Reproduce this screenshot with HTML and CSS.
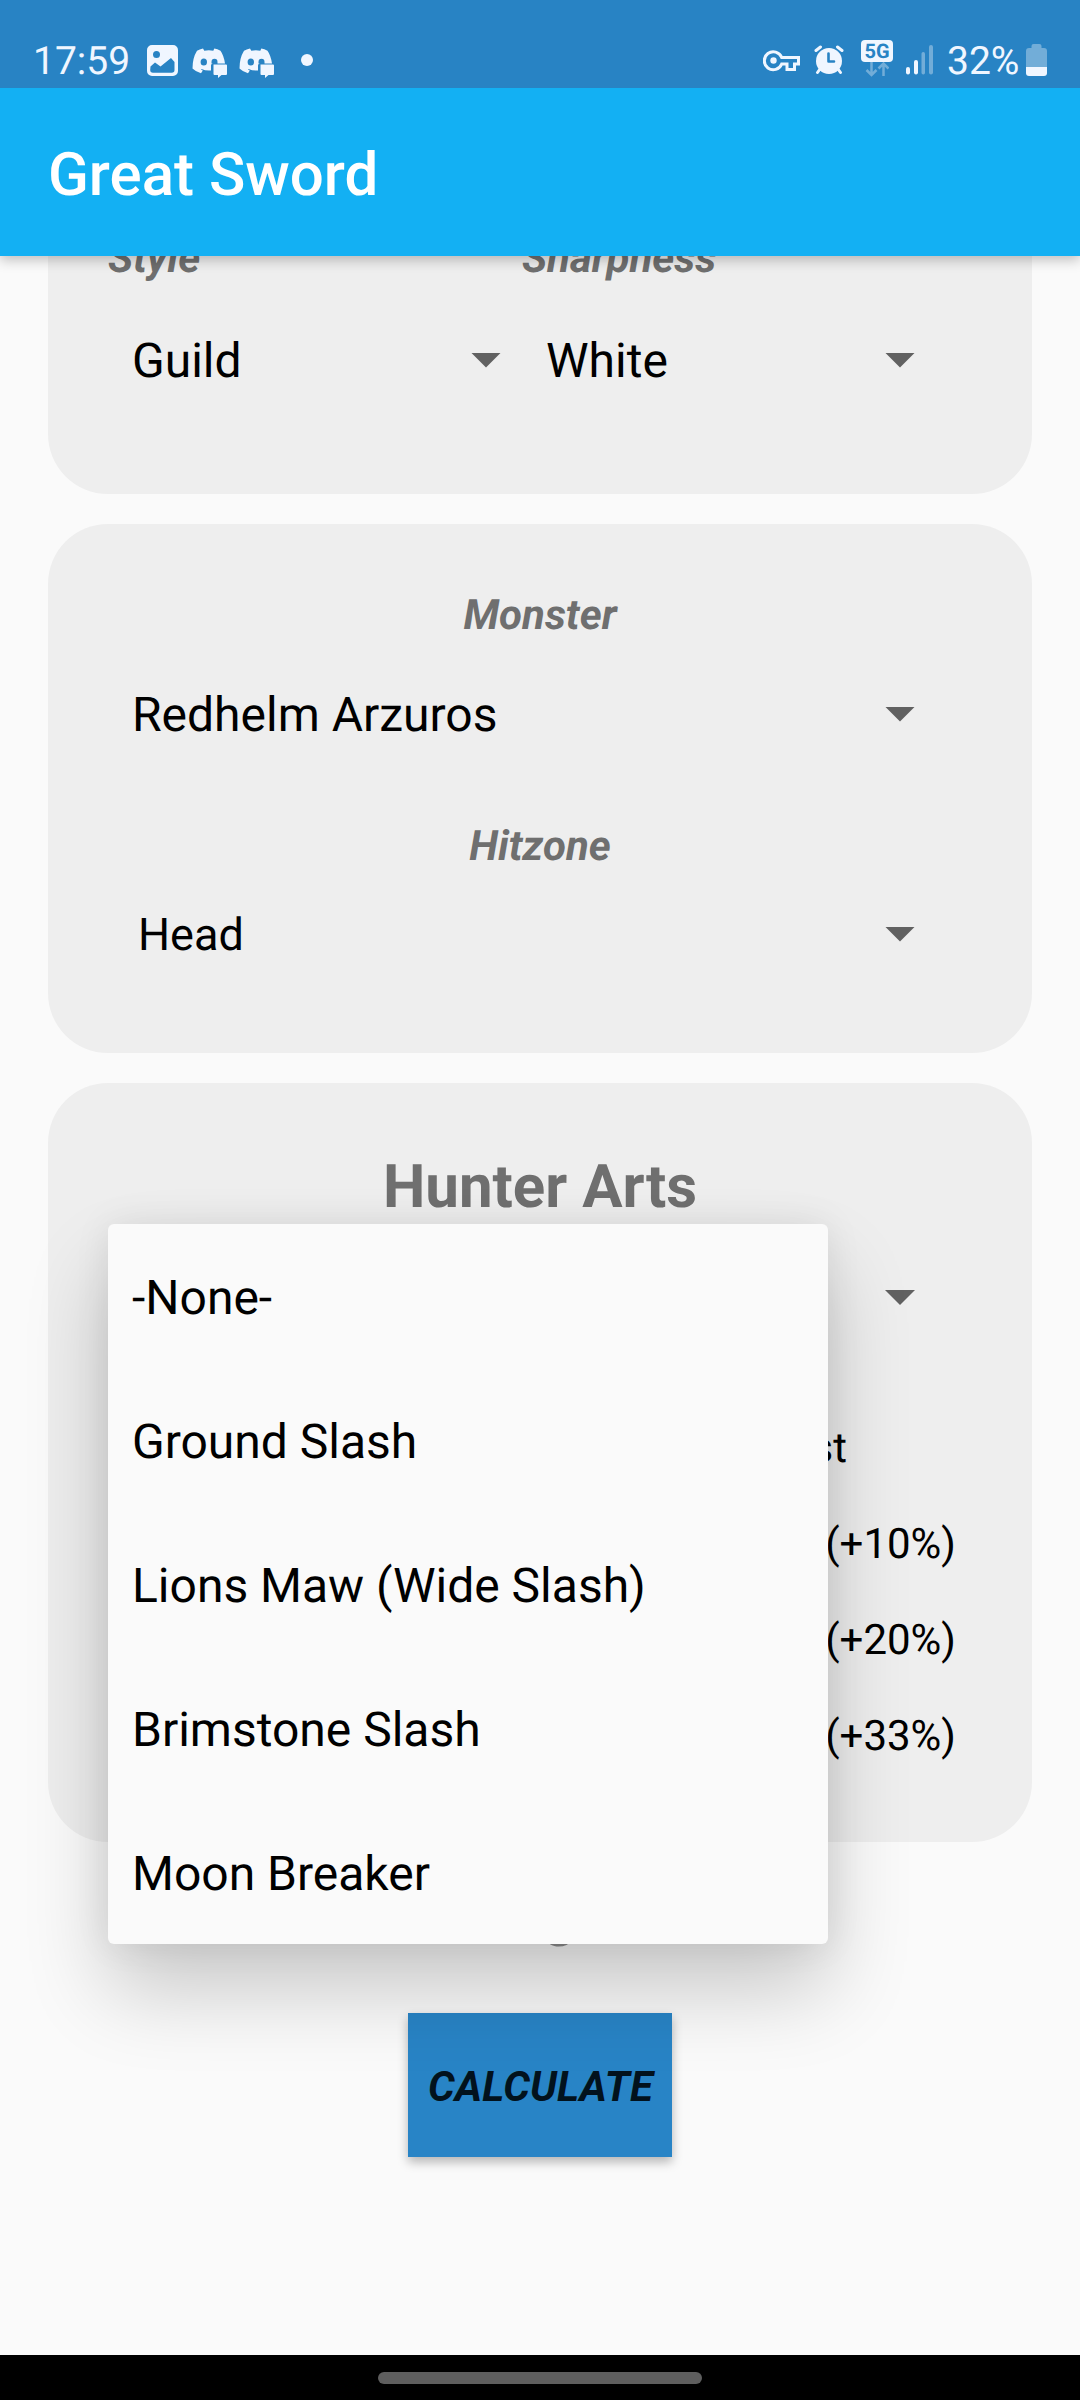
FILE: index.html
```html
<!DOCTYPE html>
<html lang="en">
<head>
<meta charset="utf-8">
<title>Great Sword</title>
<link rel="stylesheet" href="styles.css">
</head>
<body>
<div class="screen">
  <header class="status">
    <div class="status-group">
      <span class="clock">17:59</span>
      <svg class="ic-gallery" width="31" height="31" viewBox="0 0 31 31">
        <path fill="#f0f6ff" fill-rule="evenodd" d="M5 0H26a5 5 0 0 1 5 5V26a5 5 0 0 1-5 5H5a5 5 0 0 1-5-5V5a5 5 0 0 1 5-5ZM9.500 6a3.500 3.500 0 1 0 0 7a3.500 3.500 0 1 0 0-7ZM3.500 21.500L8 17.500L13.500 21.500L24 13L27.500 17V25a2.800 2.800 0 0 1-2.800 2.800H6a2.800 2.800 0 0 1-2.800-2.800Z"/>
      </svg>
      <svg class="ic-chat" width="36" height="30" viewBox="0 0 36 30">
        <path fill="#f0f6ff" fill-rule="evenodd" d="M11 .500Q7.500 1.200 5 2.800Q.500 10 .500 20.500Q4 24 9 25.200L10.800 22.500L9 21.500L9.500 21Q14 23 19 22.500V17.500a2 2 0 0 1 2-2H33Q31.800 7.500 28.500 2.800Q25.500 1 22.300 .500L21.300 2.700Q16.800 2 12.300 2.700ZM11.800 10.500a3.200 3.500 0 1 1 0 7a3.200 3.500 0 1 1 0-7ZM22.500 10.800a3 3.200 0 0 1 3 3.200v1.500h-6V14a3 3.200 0 0 1 3-3.200Z"/>
        <path fill="#f0f6ff" d="M21.500 16.500H34a1 1 0 0 1 1 1V26a1 1 0 0 1-1 1H29.500L26 30V27H22.500a1 1 0 0 1-1-1Z"/>
      </svg>
      <svg class="ic-chat second" width="36" height="30" viewBox="0 0 36 30">
        <path fill="#f0f6ff" fill-rule="evenodd" d="M11 .500Q7.500 1.200 5 2.800Q.500 10 .500 20.500Q4 24 9 25.200L10.800 22.500L9 21.500L9.500 21Q14 23 19 22.500V17.500a2 2 0 0 1 2-2H33Q31.800 7.500 28.500 2.800Q25.500 1 22.300 .500L21.300 2.700Q16.800 2 12.300 2.700ZM11.800 10.500a3.200 3.500 0 1 1 0 7a3.200 3.500 0 1 1 0-7ZM22.500 10.800a3 3.200 0 0 1 3 3.200v1.500h-6V14a3 3.200 0 0 1 3-3.200Z"/>
        <path fill="#f0f6ff" d="M21.500 16.500H34a1 1 0 0 1 1 1V26a1 1 0 0 1-1 1H29.500L26 30V27H22.500a1 1 0 0 1-1-1Z"/>
      </svg>
      <span class="dot"></span>
    </div>
    <div class="status-group">
      <svg class="ic-key" width="38" height="22" viewBox="0 0 38 22">
        <path fill="none" stroke="#f0f6ff" stroke-width="3" d="M18.700 7.500A9 9 0 1 0 18.700 14H24V19.500H31.500V14H35.500V7.500Z"/>
        <circle cx="10.500" cy="10.500" r="3.200" fill="#f0f6ff"/>
      </svg>
      <svg class="ic-alarm" width="30" height="30" viewBox="0 0 30 30">
        <circle cx="15" cy="16" r="13" fill="#f0f6ff"/>
        <path fill="none" stroke="#f0f6ff" stroke-width="3" stroke-linecap="round" d="M2 5.500L6.500 2M28 5.500L23.500 2M6 24L3.500 27.500M24 24L26.500 27.500"/>
        <path fill="none" stroke="#2883c4" stroke-width="2.600" stroke-linecap="round" stroke-linejoin="round" d="M14.500 8.500V16.500H20"/>
      </svg>
      <div class="net">
        <span class="badge">5G</span>
        <svg width="24" height="15" viewBox="0 0 24 15">
          <path fill="none" stroke="#72add8" stroke-width="2.500" d="M6.500 0V13M1.500 8L6.500 13L11.500 8M18.500 14V1M13.500 6.500L18.500 1.500L23.500 6.500"/>
        </svg>
      </div>
      <svg class="ic-signal" width="28" height="30" viewBox="0 0 28 30">
        <rect x="0" y="22" width="4" height="7.500" rx="2" fill="#f0f6ff"/>
        <rect x="8" y="15" width="4" height="14.500" rx="2" fill="#f0f6ff"/>
        <rect x="15.500" y="7" width="3.500" height="22.500" rx="1.700" fill="#72add8"/>
        <rect x="23" y="0" width="4" height="29.500" rx="2" fill="#72add8"/>
      </svg>
      <span class="percent">32%</span>
      <svg class="ic-battery" width="21" height="32" viewBox="0 0 21 32">
        <path fill="#72add8" d="M7.500 0H13.500a2 2 0 0 1 2 2V4H18a3 3 0 0 1 3 3V23H0V7A3 3 0 0 1 3 4H5.500V2a2 2 0 0 1 2-2Z"/>
        <path fill="#f0f6ff" d="M0 23H21V29a3 3 0 0 1-3 3H3a3 3 0 0 1-3-3Z"/>
      </svg>
    </div>
  </header>
  <div class="appbar"><h1>Great Sword</h1></div>

  <main class="content">
    <section class="card card-weapon">
      <div class="column">
        <div class="label">Style</div>
        <div class="spinner">Guild<i class="caret"></i></div>
      </div>
      <div class="column">
        <div class="label">Sharpness</div>
        <div class="spinner">White<i class="caret"></i></div>
      </div>
    </section>

    <section class="card card-monster">
      <div class="label centered">Monster</div>
      <div class="spinner monster">Redhelm Arzuros<i class="caret"></i></div>
      <div class="label centered hitzone-label">Hitzone</div>
      <div class="spinner hitzone">Head<i class="caret"></i></div>
    </section>

    <section class="card card-arts">
      <h2>Hunter Arts</h2>
      <div class="spinner arts"><i class="caret"></i></div>
      <div class="options">
        <div class="option short">st</div>
        <div class="option">(+10%)</div>
        <div class="option">(+20%)</div>
        <div class="option">(+33%)</div>
      </div>
    </section>

    <div class="result">g</div>
    <button class="calculate">CALCULATE</button>
  </main>

  <footer class="nav"><span class="pill"></span></footer>

  <ul class="menu">
    <li>-None-</li>
    <li>Ground Slash</li>
    <li>Lions Maw (Wide Slash)</li>
    <li>Brimstone Slash</li>
    <li>Moon Breaker</li>
  </ul>
</div>
</body>
</html>
```
FILE: styles.css
```css
* { box-sizing: border-box; }
body { margin: 0; font-family: Roboto, sans-serif; color: #000; text-rendering: geometricPrecision; }
h1, h2, ul { margin: 0; padding: 0; }

.screen {
  position: relative;
  display: flex;
  flex-direction: column;
  width: 1080px;
  height: 2400px;
  overflow: hidden;
  background: #fafafa;
}

.status {
  position: relative;
  z-index: 2;
  display: flex;
  justify-content: space-between;
  height: 88px;
  flex: none;
  padding: 0 33px 0 33px;
  background: #2883c4;
  color: #f0f6ff;
}
.status-group { display: flex; align-items: flex-start; }
.clock, .percent { font-size: 39px; line-height: 46px; margin-top: 38px; white-space: nowrap; }
.clock { width: 114px; }
.ic-gallery { margin-top: 45px; }
.ic-chat { margin: 48px 0 0 14px; }
.ic-chat.second { margin-left: 11px; }
.dot { width: 12px; height: 12px; margin: 54px 0 0 26px; border-radius: 50%; background: #f0f6ff; }
.ic-key { margin-top: 50px; }
.ic-alarm { margin: 45px 0 0 13px; }
.net { display: flex; flex-direction: column; align-items: center; width: 32px; margin: 40px 0 0 17px; }
.badge {
  width: 32px;
  height: 22px;
  border-radius: 4px;
  background: #f0f6ff;
  color: #2883c4;
  font-size: 20px;
  font-weight: 700;
  line-height: 22px;
  text-align: center;
}
.ic-signal { margin: 45px 0 0 13px; }
.percent { width: 72px; margin-left: 13px; }
.ic-battery { margin: 44px 0 0 7px; }

.appbar {
  position: relative;
  z-index: 1;
  flex: none;
  height: 168px;
  padding: 0 48px;
  background: #13b0f3;
  box-shadow: 0 4px 12px rgba(0, 0, 0, .24);
}
.appbar h1 { color: #fff; font-size: 60px; font-weight: 500; line-height: 174px; }

.content { flex: 1; min-height: 0; padding: 0 48px; }
.card { border-radius: 60px; background: #eee; padding: 0 60px; }
.card-weapon { display: flex; height: 338px; margin-top: -100px; padding-top: 72px; }
.column { width: 414px; }
.label { height: 60px; font-size: 42px; font-weight: 700; font-style: italic; line-height: 62px; color: #6f6f6f; }
.centered { text-align: center; }
.spinner {
  display: flex;
  align-items: center;
  justify-content: space-between;
  height: 144px;
  padding: 0 21px 0 24px;
  font-size: 48px;
}
.caret { width: 30px; height: 15px; background: #616161; clip-path: polygon(0 0, 100% 0, 50% 100%); }

.card-monster { height: 529px; margin-top: 30px; padding-top: 61px; }
.spinner.monster { width: 828px; height: 138px; }
.hitzone-label { margin-top: 33px; }
.spinner.hitzone { width: 828px; height: 116px; padding-left: 30px; font-size: 45px; }

.card-arts { height: 759px; margin-top: 30px; padding-top: 64px; }
.card-arts h2 { font-size: 60px; font-weight: 700; line-height: 80px; text-align: center; color: #6f6f6f; }
.spinner.arts { width: 828px; height: 141px; justify-content: flex-end; }
.options { width: 848px; margin-top: 33px; text-align: right; }
.option { font-size: 42px; line-height: 96px; }
.option.short { padding-right: 109px; }

.result { height: 82px; margin-top: 31px; padding-left: 40px; font-size: 60px; font-weight: 700; line-height: 82px; text-align: center; color: #8f8f8f; }
.calculate {
  display: block;
  width: 264px;
  height: 144px;
  margin: 58px auto 0;
  padding: 4px 0 0 1px;
  border: 0;
  background: #2884c6;
  box-shadow: 0 5px 10px rgba(0, 0, 0, .28);
  color: #02121d;
  font: italic 700 42px/140px Roboto, sans-serif;
  letter-spacing: .15px;
  white-space: nowrap;
}

.nav { position: relative; flex: none; display: flex; justify-content: center; height: 45px; padding-top: 17px; background: #000; }
.pill { width: 324px; height: 12px; border-radius: 6px; background: #5e5e5e; }

.menu {
  position: absolute;
  z-index: 3;
  left: 108px;
  top: 1224px;
  width: 720px;
  list-style: none;
  border-radius: 6px;
  background: #fafafa;
  box-shadow: 0 46px 84px rgba(0, 0, 0, .2), 0 0 36px rgba(0, 0, 0, .08);
}
.menu li { height: 144px; padding: 2px 24px 0; font-size: 48px; line-height: 144px; }
```
